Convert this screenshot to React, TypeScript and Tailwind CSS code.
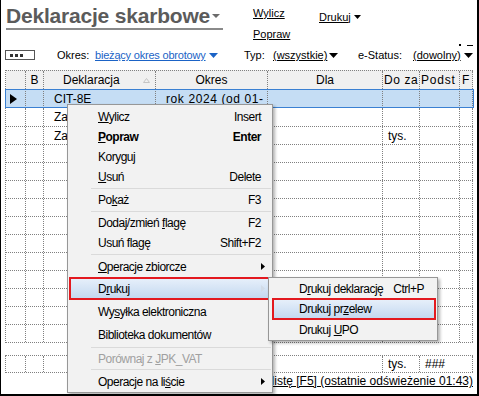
import React from "react";

const dot = "border-dotted border-[#808080]";

const colW = ["w-[20px]", "w-[18px]", "w-[112px]", "w-[112px]", "w-[115px]", "w-[37px]", "w-[40px]", "w-[13px]"];

function Tri({ w = 7, h = 4, color = "#000" }: { w?: number; h?: number; color?: string }) {
  return (
    <svg width={w} height={h} viewBox={`0 0 ${w} ${h}`} className="shrink-0 block">
      <path d={`M0 0H${w}L${w / 2} ${h}Z`} fill={color} />
    </svg>
  );
}

function Arrow({ color = "#000" }: { color?: string }) {
  return (
    <svg width="4" height="7" viewBox="0 0 4 7" className="shrink-0 block">
      <path d="M0 0L4 3.5L0 7Z" fill={color} />
    </svg>
  );
}

function U({ children }: { children: React.ReactNode }) {
  return <span className="underline">{children}</span>;
}

function Row({
  cells,
  className = "",
  children,
}: {
  cells: React.ReactNode[];
  className?: string;
  children?: React.ReactNode;
}) {
  return (
    <div className={`flex ${className}`}>
      {colW.map((w, i) => (
        <div key={i} className={`${w} shrink-0 h-full border-r ${dot} overflow-hidden whitespace-nowrap flex items-center`}>
          {cells[i]}
        </div>
      ))}
      {children}
    </div>
  );
}

type ItemProps = {
  label: React.ReactNode;
  shortcut?: string;
  arrow?: boolean;
  bold?: boolean;
  disabled?: boolean;
  h: string;
};

function MenuItem({ label, shortcut, arrow, bold, disabled, h }: ItemProps) {
  return (
    <div
      className={`flex items-center ${h} pl-[30px] ${arrow ? "pr-[7px]" : "pr-[11px]"} ${bold ? "font-bold" : ""} ${
        disabled ? "text-[#a0a0a0]" : ""
      }`}
    >
      <span className="flex-1 whitespace-nowrap">{label}</span>
      {shortcut && <span className="whitespace-nowrap">{shortcut}</span>}
      {arrow && <Arrow />}
    </div>
  );
}

function Sep() {
  return <div className="my-[1px] ml-[23px] mr-[1px] h-[1px] bg-[#dadada]" />;
}

const emptyRows = Array.from({ length: 11 });

export default function App() {
  return (
    <div className="relative w-[479px] h-[396px] overflow-hidden bg-white border-l border-r-2 border-b-2 border-black font-['Liberation_Sans',Arial,sans-serif] text-black">
      {/* title + actions */}
      <div className="flex h-[48px] pt-[4px] pl-[5px]">
        <div className="flex w-[217px] h-[26px] items-start border-b-2 border-[#8a8a8a]">
          <span className="text-[21px] leading-[24px] font-bold tracking-[-0.2px] text-[#5b5b5b] whitespace-nowrap">
            Deklaracje skarbowe
          </span>
          <span className="ml-[2px] mt-[10px]">
            <Tri w={8} h={4} color="#6b6b6b" />
          </span>
        </div>
        <div className="ml-[30px] mt-[2px] grid grid-cols-[66px_auto] text-[11px] leading-[14px]">
          <span className="underline">Wylicz</span>
          <span className="flex items-center gap-[3px]">
            <span className="underline">Drukuj</span>
            <Tri />
          </span>
          <span className="underline">Popraw</span>
        </div>
      </div>

      {/* filters */}
      <div className="flex items-center h-[14px] pl-[4px] text-[11px] leading-[14px]">
        <div className="flex items-center gap-[2px] pl-[4px] w-[30px] h-[10px] border border-[#555]">
          <span className="w-[3px] h-[3px] bg-[#333]" />
          <span className="w-[3px] h-[3px] bg-[#333]" />
          <span className="w-[3px] h-[3px] bg-[#333]" />
        </div>
        <div className="ml-[22px] w-[187px] flex items-center">
          <span className="w-[38px]">Okres:</span>
          <span className="underline text-[#1b63c6] tracking-[-0.2px] whitespace-nowrap">bieżący okres obrotowy</span>
          <span className="ml-[3px]">
            <Tri w={9} h={5} color="#1b63c6" />
          </span>
        </div>
        <div className="w-[114px] flex items-center">
          <span className="w-[29px]">Typ:</span>
          <span className="underline">(wszystkie)</span>
          <span className="ml-[2px]">
            <Tri w={9} h={5} />
          </span>
        </div>
        <div className="flex items-center">
          <span className="w-[55px]">e-Status:</span>
          <span className="underline">(dowolny)</span>
          <span className="relative ml-[3px]">
            <Tri w={9} h={5} />
            <span className="absolute left-[-5px] top-[-9px] w-[2px] h-[2px] bg-black" />
            <span className="absolute left-[3px] top-[-8px] w-[6px] h-[1px] bg-black" />
          </span>
        </div>
      </div>

      {/* grid */}
      <div className={`ml-[4px] mt-[8px] w-[468px] border-l ${dot} text-[12px] leading-[14px]`}>
        <Row
          className={`h-[19px] bg-[#f0f0f0] border-t ${dot}`}
          cells={[
            null,
            <span className="w-full text-center">B</span>,
            <span className="flex w-full items-center justify-between pl-[19px] pr-[5px]">
              Deklaracja
              <svg width="7" height="5" viewBox="0 0 7 5" className="block">
                <path d="M0.5 4.5L3.5 0.5L6.5 4.5Z" fill="none" stroke="#c4c4c4" />
              </svg>
            </span>,
            <span className="w-full text-center">Okres</span>,
            <span className="w-full text-center">Dla</span>,
            <span className="pl-[1px] tracking-[0.6px]">Do za</span>,
            <span className="pl-[1px] tracking-[0.8px]">Podst</span>,
            <span className="pl-[2px]">F</span>,
          ]}
        />
        <Row
          className="relative h-[19px] bg-[#c5ddf4]"
          cells={[
            <span className="pl-[4px]">
              <svg width="7" height="10" viewBox="0 0 7 10" className="block">
                <path d="M0 0L7 5L0 10Z" fill="#000" />
              </svg>
            </span>,
            null,
            <span className="pl-[10px]">CIT-8E</span>,
            <span className="pl-[10px] tracking-[0.6px]">rok 2024 (od 01-</span>,
          ]}
        >
          <div className="absolute -left-[1px] -right-[1px] top-0 bottom-0 border border-[#3a80d2]" />
        </Row>
        <Row
          className={`h-[19px] border-b ${dot}`}
          cells={[null, null, <span className="pl-[10px]">Zaliczka CIT-8</span>, <span className="pl-[10px]">styczeń 2024</span>]}
        />
        <Row
          className={`h-[18px] border-b ${dot}`}
          cells={[
            null,
            null,
            <span className="pl-[10px]">Zaliczka CIT-8</span>,
            <span className="pl-[10px]">luty 2024</span>,
            null,
            <span className="pl-[5px]">tys.</span>,
          ]}
        />
        {emptyRows.map((_, i) => (
          <Row key={i} className={`h-[18px] border-b ${dot}`} cells={[]} />
        ))}
      </div>

      {/* footer sum */}
      <div className={`ml-[4px] mt-[12px] flex h-[18px] w-[468px] border-l border-y ${dot} text-[12px]`}>
        <div className={`w-[20px] h-full border-r ${dot}`} />
        <div className={`w-[18px] h-full border-r ${dot}`} />
        <div className={`w-[112px] h-full border-r ${dot}`} />
        <div className={`w-[112px] h-full border-r ${dot}`} />
        <div className={`w-[115px] h-full border-r ${dot}`} />
        <div className={`w-[37px] h-full border-r ${dot} flex items-center pl-[5px]`}>tys.</div>
        <div className={`w-[53px] h-full border-r ${dot} flex items-center pl-[5px]`}>###</div>
      </div>

      {/* status */}
      <div className="h-[16px] pr-[4px] text-right text-[12px] leading-[16px]">
        <span className="underline whitespace-nowrap">Odśwież listę [F5] (ostatnie odświeżenie 01:43)</span>
      </div>

      {/* context menu */}
      <div className="absolute left-[66px] top-[104px] w-[206px] h-[289px] border border-[#979797] bg-[#f2f2f2] pt-[2px] text-[12px] leading-none tracking-[-0.5px] shadow-[2px_2px_3px_rgba(0,0,0,0.3)]">
        <MenuItem h="h-[20px]" label={<><U>W</U>ylicz</>} shortcut="Insert" />
        <MenuItem h="h-[20px]" bold label={<><U>P</U>opraw</>} shortcut="Enter" />
        <MenuItem h="h-[20px]" label={<>Korygu<U>j</U></>} />
        <MenuItem h="h-[20px]" label={<><U>U</U>suń</>} shortcut="Delete" />
        <Sep />
        <MenuItem h="h-[20px]" label={<>Po<U>k</U>aż</>} shortcut="F3" />
        <Sep />
        <MenuItem h="h-[20px]" label={<>Dodaj/zmień <U>f</U>lagę</>} shortcut="F2" />
        <MenuItem h="h-[20px]" label={<>Usuń fla<U>g</U>ę</>} shortcut="Shift+F2" />
        <Sep />
        <MenuItem h="h-[21px]" arrow label={<><U>O</U>peracje zbiorcze</>} />
        <div className="mx-[1px] h-[23px] flex items-center pl-[27px] pr-[4px] border-2 border-[#e3191f] bg-linear-to-b from-[#e6effa] to-[#c4d9f0]">
          <span className="flex-1">
            D<U>r</U>ukuj
          </span>
          <Arrow color="#d2dce8" />
        </div>
        <MenuItem h="h-[23px]" label={<>Wy<U>s</U>yłka elektroniczna</>} />
        <MenuItem h="h-[23px]" label="Biblioteka dokumentów" />
        <Sep />
        <MenuItem h="h-[19px]" disabled label={<>Porównaj z <U>J</U>PK_VAT</>} />
        <Sep />
        <MenuItem h="h-[21px]" arrow label={<>Operacje na li<U>ś</U>cie</>} />
      </div>

      {/* submenu */}
      <div className="absolute left-[267px] top-[277px] w-[170px] h-[64px] border border-[#979797] bg-[#f2f2f2] pt-[1px] text-[12px] leading-none tracking-[-0.5px] shadow-[2px_2px_3px_rgba(0,0,0,0.3)]">
        <div className="flex items-center h-[19px] pl-[30px] pr-[13px]">
          <span className="flex-1 whitespace-nowrap">
            D<U>r</U>ukuj deklarację
          </span>
          <span>Ctrl+P</span>
        </div>
        <div className="ml-[3px] mr-[1px] h-[22px] flex items-center pl-[25px] border-2 border-[#e3191f] bg-linear-to-b from-[#e6effa] to-[#c4d9f0]">
          Drukuj pr<U>z</U>elew
        </div>
        <div className="flex items-center h-[20px] pl-[30px]">
          Drukuj <span className="ml-[3px]"><U>U</U>PO</span>
        </div>
      </div>
    </div>
  );
}
